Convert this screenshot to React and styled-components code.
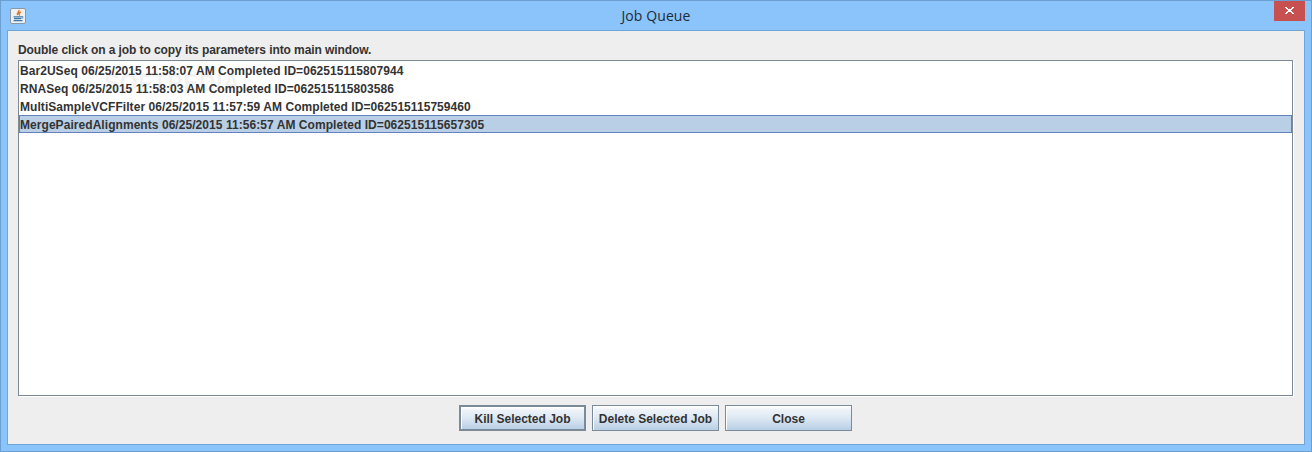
import React from "react";
import styled, { createGlobalStyle } from "styled-components";

const Global = createGlobalStyle`
  html, body { margin: 0; padding: 0; background: #8ac4fb; }
  * { box-sizing: border-box; }
`;

const Frame = styled.div`
  width: 1312px;
  height: 452px;
  display: flex;
  flex-direction: column;
  background: #8ac4fb;
  border: 1px solid #6b9fd2;
  font-family: "Liberation Sans", Arial, sans-serif;
  color: #333;
`;

const TitleBar = styled.div`
  height: 29px;
  flex: none;
  display: grid;
  grid-template-columns: 1fr auto 1fr;
  align-items: start;
`;

const AppIcon = styled.div`
  width: 16px;
  height: 16px;
  margin: 7px 0 0 9px;
  display: flex;
`;

const Title = styled.div`
  font-size: 14px;
  line-height: 30px;
  color: #1f2b38;
  font-family: "Open Sans", "Liberation Sans", sans-serif;
  letter-spacing: 0.1px;
`;

const CloseButton = styled.div`
  justify-self: end;
  width: 31px;
  height: 20px;
  margin-right: 6px;
  background: #c75050;
  display: flex;
  align-items: center;
  justify-content: center;
`;

const Panel = styled.div`
  flex: 1;
  margin: 0 6px 6px 6px;
  background: #eeeeee;
  border: 1px solid #6fa5d9;
  padding: 11px 11px 13px 10px;
  display: flex;
  flex-direction: column;
`;

const Hint = styled.div`
  font-size: 12px;
  font-weight: 700;
  line-height: 14px;
  height: 18px;
  padding-top: 1px;
  color: #333;
  letter-spacing: -0.08px;
`;

const List = styled.div`
  position: relative;
  flex: 1;
  background: #fff;
  border: 1px solid #7a8a99;
  box-shadow: 1px 1px 0 #fff;
  overflow: hidden;
`;

const Row = styled.div`
  height: 18px;
  line-height: 19px;
  font-size: 12px;
  font-weight: 700;
  color: #333;
  white-space: pre;
  letter-spacing: 0.055px;
  border: 1px solid ${(p) => (p.$selected ? "#6382bf" : "transparent")};
  background: ${(p) => (p.$selected ? "#b8cfe5" : "transparent")};
`;

const Watermark = styled.div`
  position: absolute;
  left: 85px;
  top: 9px;
  font-size: 23px;
  font-weight: 700;
  letter-spacing: 0.5px;
  color: rgba(120, 120, 120, 0.1);
  pointer-events: none;
`;

const Actions = styled.div`
  flex: none;
  display: flex;
  justify-content: center;
  gap: 6px;
  padding-top: 9px;
`;

const Button = styled.button`
  width: 127px;
  height: 26px;
  padding: 1px 0 0;
  font-family: "Liberation Sans", Arial, sans-serif;
  font-size: 12px;
  font-weight: 700;
  color: #333;
  border: ${(p) => (p.$focused ? "2px solid #7a8a99" : "1px solid #7a8a99")};
  background: linear-gradient(to bottom, #ffffff 0%, #eef3f8 15%, #dde8f3 50%, #b8cfe5 100%);
  box-shadow: inset 1px 1px 0 #fff;
`;

const rows = [
  "Bar2USeq 06/25/2015 11:58:07 AM Completed ID=062515115807944",
  "RNASeq 06/25/2015 11:58:03 AM Completed ID=062515115803586",
  "MultiSampleVCFFilter 06/25/2015 11:57:59 AM Completed ID=062515115759460",
  "MergePairedAlignments 06/25/2015 11:56:57 AM Completed ID=062515115657305",
];

function JavaIcon() {
  return (
    <svg width="16" height="16" viewBox="0 0 16 16">
      <rect x="0.5" y="0.5" width="15" height="15" rx="1.5" fill="#eef1f4" stroke="#8b97a3" />
      <path d="M8.8 2c1.2 1.8-2.6 2.6-1.2 5M11 4c-2.4 1-2.4 2-1.2 3.4" fill="none" stroke="#e2761c" strokeWidth="1.5" />
      <path d="M3.5 8.8h7.5M4 10.6h7M3.5 12.6h9" stroke="#3f78a8" strokeWidth="1.2" />
      <path d="M11 8.5h1.8v1.6H11" fill="none" stroke="#3f78a8" strokeWidth="0.8" />
    </svg>
  );
}

function CloseGlyph() {
  return (
    <svg width="9" height="9" viewBox="0 0 9 9" shapeRendering="crispEdges">
      <path d="M0 0h2v1h1v1h3v-1h1v-1h2v1h-1v1h-1v1h-1v1h1v1h1v1h1v1h-2v-1h-1v-1h-3v1h-1v1h-2v-1h1v-1h1v-1h1v-1h-1v-1h-1v-1h-1z" fill="#fff" />
    </svg>
  );
}

export default function App() {
  return (
    <>
      <Global />
      <Frame>
        <TitleBar>
          <AppIcon><JavaIcon /></AppIcon>
          <Title>Job Queue</Title>
          <CloseButton><CloseGlyph /></CloseButton>
        </TitleBar>
        <Panel>
          <Hint>Double click on a job to copy its parameters into main window.</Hint>
          <List>
            {rows.map((r, i) => (
              <Row key={r} $selected={i === 3}>{r}</Row>
            ))}
            <Watermark>SOFTPEDIA</Watermark>
          </List>
          <Actions>
            <Button $focused>Kill Selected Job</Button>
            <Button>Delete Selected Job</Button>
            <Button>Close</Button>
          </Actions>
        </Panel>
      </Frame>
    </>
  );
}
